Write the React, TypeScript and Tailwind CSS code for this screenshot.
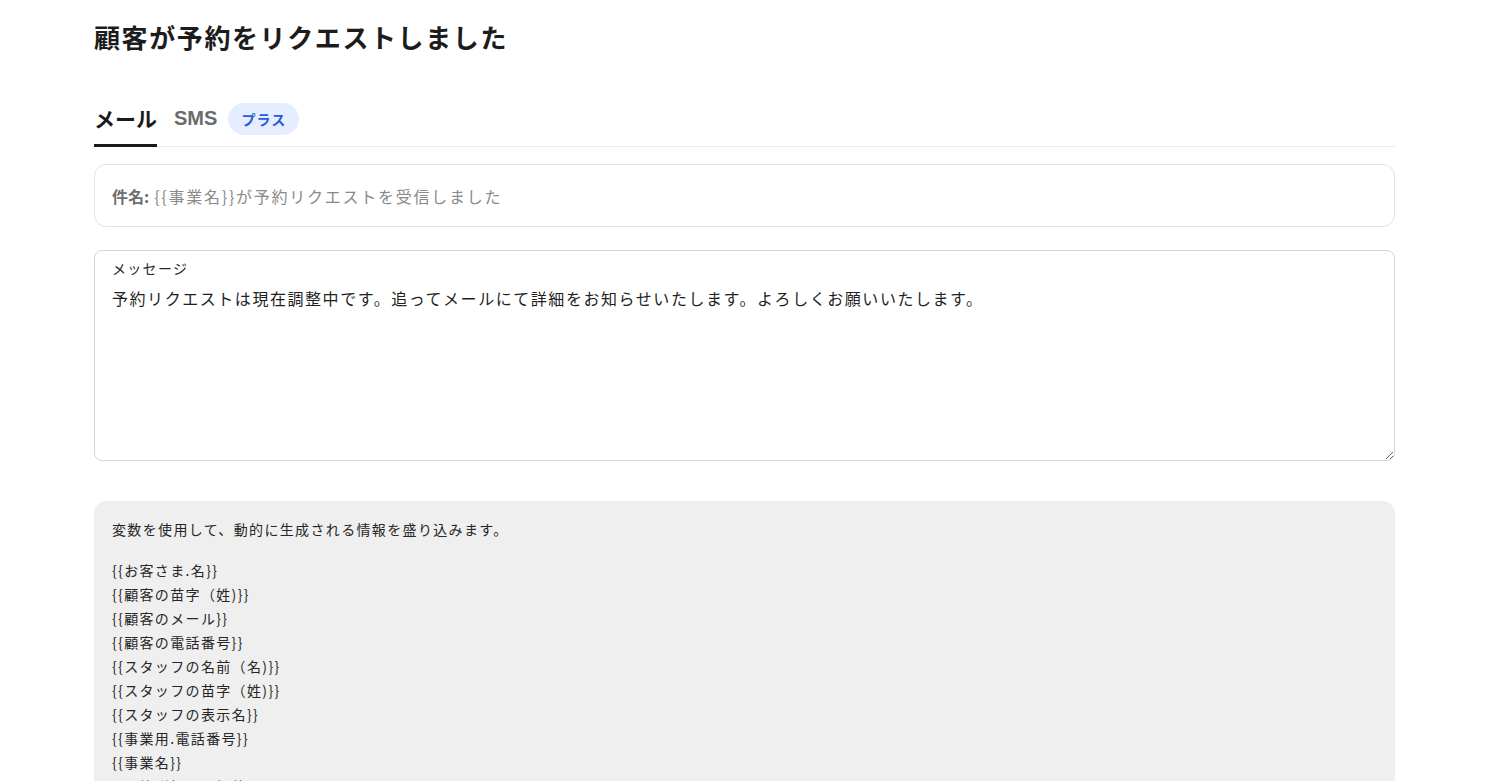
import React from "react";

const variables = [
    "{{お客さま.名}}",
    "{{顧客の苗字（姓)}}",
    "{{顧客のメール}}",
    "{{顧客の電話番号}}",
    "{{スタッフの名前（名)}}",
    "{{スタッフの苗字（姓)}}",
    "{{スタッフの表示名}}",
    "{{事業用.電話番号}}",
    "{{事業名}}",
    "{{予約詳細への招待}}",
];

const font = "font-['Noto_Sans_CJK_JP','Noto_Sans',sans-serif]";

export default function App() {
    return (
        <div className={`min-h-screen bg-white pl-[94px] pr-[105px] pt-[19px] text-[#1f1f1f] ${font}`}>
            <h1 className="text-[26px] font-bold leading-[36px] tracking-[1.6px] text-[#1c1c1c]">
                顧客が予約をリクエストしました
            </h1>

            {/* Tabs */}
            <div className="mt-[48px] flex items-end border-b border-[#ececec]">
                <div className="-mb-px border-b-[3px] border-[#1a1a1a] pb-[12px] text-[21px] font-bold leading-[28px] text-[#1a1a1a]">
                    メール
                </div>
                <div className="ml-[17px] pb-[14px] text-[20px] font-bold leading-[28px] text-[#6b6b6b] font-['Liberation_Sans','Noto_Sans_CJK_JP',sans-serif]">
                    SMS
                </div>
                <div className="ml-[11px] mb-[11px] flex h-[32px] w-[71px] items-center justify-center rounded-full bg-[#e5eefe] text-[14px] font-bold tracking-[1px] text-[#2a5bd7]">
                    プラス
                </div>
            </div>

            {/* Subject */}
            <div className="mt-[17px] flex h-[63px] items-center rounded-xl border border-[#e3e3e3] px-[17px] text-[16px] tracking-[1.75px]">
                <span className="font-bold tracking-normal text-[#6e6e6e]">件名:</span>
                <span className="ml-[5px] text-[#8a8a8a]">{"{{事業名}}が予約リクエストを受信しました"}</span>
            </div>

            {/* Message */}
            <div className="relative mt-[23px]">
                <span className="absolute left-[18px] top-[8px] text-[14px] leading-[20px] tracking-[1.3px] text-[#2a2a2a]">メッセージ</span>
                <textarea
                    readOnly
                    defaultValue="予約リクエストは現在調整中です。追ってメールにて詳細をお知らせいたします。よろしくお願いいたします。"
                    className="block h-[211px] w-full resize-y rounded-lg border border-[#d6d6d6] px-[17px] pt-[34px] text-[16px] leading-[26px] tracking-[1.55px] text-[#1f1f1f] outline-none"
                />
            </div>

            {/* Variables */}
            <div className="mt-[40px] rounded-xl bg-[#efefef] px-[18px] pt-[17px] pb-[20px] text-[14px] tracking-[1.35px] text-[#262626]">
                <p className="leading-[22px]">変数を使用して、動的に生成される情報を盛り込みます。</p>
                <ul className="mt-[18px]">
                    {variables.map((v) => (
                        <li key={v} className="leading-[24px]">{v}</li>
                    ))}
                </ul>
            </div>
        </div>
    );
}
